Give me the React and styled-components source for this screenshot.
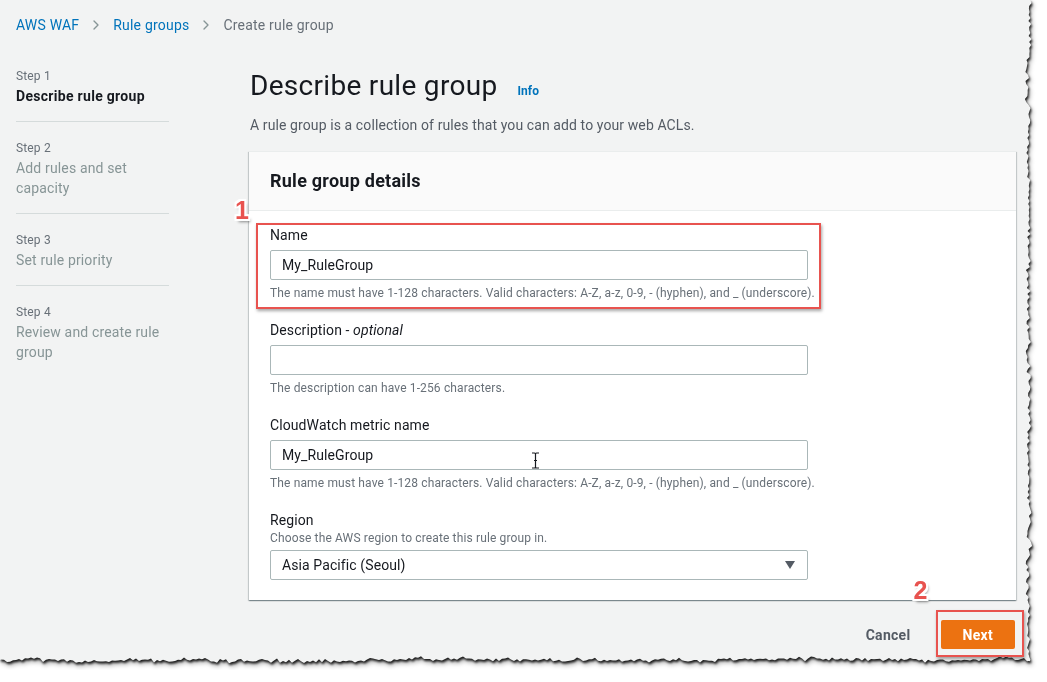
import React from "react";
import styled, { createGlobalStyle } from "styled-components";
import { ChevronRight } from "lucide-react";

const GlobalStyle = createGlobalStyle`
  html, body {
    margin: 0;
    padding: 0;
    background: #ffffff;
  }
  body {
    font-family: Roboto, "Liberation Sans", Arial, sans-serif;
    color: #16191f;
    letter-spacing: 0.1px;
  }
`;

// torn paper edge along right and bottom side of the screenshot
const FRAME_W = 1038;
const FRAME_H = 670;

function tornEdge() {
  let seed = 11;
  const rand = () => {
    seed = (seed * 16807) % 2147483647;
    return seed / 2147483647;
  };
  let slow = 0.5;
  const pts = ["0 0"];
  for (let y = 0; y <= FRAME_H - 6; y += 3) {
    slow = slow * 0.75 + rand() * 0.25;
    const x = FRAME_W - 3 - slow * 9 - rand() * 3.5;
    pts.push(`${x.toFixed(1)}px ${y}px`);
  }
  for (let x = FRAME_W - 8; x >= 0; x -= 3) {
    slow = slow * 0.75 + rand() * 0.25;
    const y = FRAME_H - 4 - slow * 9 - rand() * 3.5;
    pts.push(`${x}px ${y.toFixed(1)}px`);
  }
  pts.push(`0 ${FRAME_H - 10}px`);
  return `polygon(${pts.join(", ")})`;
}

const TORN = tornEdge();

const Shadow = styled.div`
  width: ${FRAME_W}px;
  height: ${FRAME_H}px;
  filter: drop-shadow(1px 2px 1px rgba(0, 0, 0, 0.85)) drop-shadow(1px 2px 2px rgba(0, 0, 0, 0.35));
`;

const Frame = styled.div`
  width: 100%;
  height: 100%;
  background: #f2f3f3;
  clip-path: ${(p) => p.$clip};
  box-sizing: border-box;
  padding: 15px 0 0 16px;
`;

const Crumbs = styled.nav`
  display: flex;
  align-items: center;
  gap: 9px;
  font-size: 14px;
  line-height: 20px;
  letter-spacing: 0.2px;
`;

const Crumb = styled.span`
  color: ${(p) => (p.$current ? "#687078" : "#0073bb")};
`;

const Layout = styled.div`
  display: grid;
  grid-template-columns: 153px 767px;
  column-gap: 80px;
  margin-top: 33px;
`;

const StepList = styled.ol`
  list-style: none;
  margin: 0;
  padding: 0;
`;

const Step = styled.li`
  padding: ${(p) => (p.$first ? "0" : "18px")} 0 15px;
  border-bottom: ${(p) => (p.$last ? "none" : "1px solid #d5dbdb")};
`;

const StepNum = styled.div`
  font-size: 12px;
  line-height: 16px;
  letter-spacing: 0.15px;
  color: #687078;
  margin-bottom: 2px;
`;

const StepTitle = styled.div`
  font-size: 14px;
  line-height: 20px;
  color: ${(p) => (p.$active ? "#16191f" : "#879596")};
  font-weight: ${(p) => (p.$active ? 700 : 400)};
  letter-spacing: ${(p) => (p.$active ? "0.3px" : "0.15px")};
`;

const Main = styled.main`
  display: flex;
  flex-direction: column;
`;

const TitleRow = styled.div`
  display: flex;
  align-items: center;
  padding-left: 1px;
`;

const Title = styled.h1`
  margin: 0;
  font-size: 28px;
  line-height: 36px;
  font-weight: 400;
  letter-spacing: 0.3px;
  color: #16191f;
`;

const Info = styled.a`
  margin: 10px 0 0 20px;
  font-size: 12px;
  font-weight: 700;
  color: #0073bb;
`;

const Lead = styled.p`
  margin: 11px 0 16px 1px;
  font-size: 14px;
  line-height: 20px;
  color: #545b64;
`;

const Card = styled.section`
  background: #ffffff;
  box-shadow: 0 1px 1px 0 rgba(0, 28, 36, 0.3), 1px 1px 1px 0 rgba(0, 28, 36, 0.15),
    -1px 1px 1px 0 rgba(0, 28, 36, 0.15);
  border-top: 1px solid #eaeded;
`;

const CardHead = styled.header`
  background: #fafafa;
  border-bottom: 1px solid #eaeded;
  padding: 18px 21px 18px;
`;

const CardTitle = styled.h2`
  margin: 0;
  font-size: 18px;
  line-height: 22px;
  font-weight: 700;
  letter-spacing: 0.25px;
`;

const CardBody = styled.div`
  display: flex;
  flex-direction: column;
  gap: 19px;
  padding: 14px 20px 20px 21px;
`;

const Field = styled.div`
  position: relative;
  display: flex;
  flex-direction: column;
  width: 538px;
`;

const Label = styled.label`
  font-size: 14px;
  line-height: 20px;
  color: #16191f;

  i {
    font-style: italic;
  }
`;

const Hint = styled.div`
  font-size: 12px;
  line-height: 16px;
  letter-spacing: 0.14px;
  color: #687078;
  margin-top: ${(p) => (p.$above ? "0" : "5px")};
  white-space: nowrap;
`;

const Input = styled.div`
  position: relative;
  box-sizing: border-box;
  height: 30px;
  margin-top: ${(p) => (p.$tight ? "4px" : "5px")};
  border: 1px solid #aab7b8;
  border-radius: 2px;
  background: #ffffff;
  display: flex;
  align-items: center;
  justify-content: space-between;
  padding: 0 12px 0 11px;
  font-size: 14px;
  color: #16191f;
`;

const Caret = styled.span`
  width: 0;
  height: 0;
  border-left: 5.5px solid transparent;
  border-right: 5.5px solid transparent;
  border-top: 8px solid #545b64;
`;

const Cursor = styled.svg`
  position: absolute;
  left: 260px;
  top: 11px;
`;

const Highlight = styled.div`
  position: absolute;
  left: ${(p) => p.$left}px;
  top: ${(p) => p.$top}px;
  width: ${(p) => p.$w}px;
  height: ${(p) => p.$h}px;
  box-sizing: border-box;
  border: 2px solid #e8534f;
  box-shadow: 1px 2px 3px rgba(0, 0, 0, 0.35);
  pointer-events: none;
`;

const Badge = styled.span`
  position: absolute;
  left: ${(p) => p.$left}px;
  top: ${(p) => p.$top}px;
  font-family: "Liberation Sans", Arial, sans-serif;
  font-weight: 700;
  font-size: 25px;
  line-height: 24px;
  letter-spacing: 0;
  color: #e8534f;
  text-shadow: -2px 0 0 #fff, 2px 0 0 #fff, 0 -2px 0 #fff, 0 2px 0 #fff,
    -2px -2px 0 #fff, 2px 2px 0 #fff, -2px 2px 0 #fff, 2px -2px 0 #fff,
    2px 3px 3px rgba(0, 0, 0, 0.45);
`;

const Footer = styled.div`
  display: flex;
  justify-content: flex-end;
  align-items: center;
  gap: 10px;
  margin-top: 20px;
  padding-right: 1px;
`;

const Button = styled.button`
  position: relative;
  height: 29px;
  padding: 0 ${(p) => (p.$primary ? "22px" : "20px")};
  border: none;
  border-radius: 2px;
  font-family: Roboto, "Liberation Sans", Arial, sans-serif;
  font-size: 14px;
  font-weight: 700;
  letter-spacing: 0.3px;
  background: ${(p) => (p.$primary ? "#ec7211" : "transparent")};
  color: ${(p) => (p.$primary ? "#ffffff" : "#545b64")};
`;

const steps = [
  { num: "Step 1", title: "Describe rule group" },
  { num: "Step 2", title: "Add rules and set capacity" },
  { num: "Step 3", title: "Set rule priority" },
  { num: "Step 4", title: "Review and create rule group" },
];

const nameHint =
  "The name must have 1-128 characters. Valid characters: A-Z, a-z, 0-9, - (hyphen), and _ (underscore).";

export default function App() {
  return (
    <>
      <GlobalStyle />
      <Shadow>
        <Frame $clip={TORN}>
          <Crumbs>
            <Crumb>AWS WAF</Crumb>
            <ChevronRight size={16} color="#879596" strokeWidth={2} />
            <Crumb>Rule groups</Crumb>
            <ChevronRight size={16} color="#879596" strokeWidth={2} />
            <Crumb $current>Create rule group</Crumb>
          </Crumbs>

          <Layout>
            <StepList>
              {steps.map((s, i) => (
                <Step key={s.num} $first={i === 0} $last={i === steps.length - 1}>
                  <StepNum>{s.num}</StepNum>
                  <StepTitle $active={i === 0}>{s.title}</StepTitle>
                </Step>
              ))}
            </StepList>

            <Main>
              <TitleRow>
                <Title>Describe rule group</Title>
                <Info>Info</Info>
              </TitleRow>
              <Lead>A rule group is a collection of rules that you can add to your web ACLs.</Lead>

              <Card>
                <CardHead>
                  <CardTitle>Rule group details</CardTitle>
                </CardHead>
                <CardBody>
                  <Field>
                    <Label>Name</Label>
                    <Input>My_RuleGroup</Input>
                    <Hint>{nameHint}</Hint>
                    <Highlight $left={-14} $top={-2} $w={565} $h={86} />
                    <Badge $left={-35} $top={-27}>1</Badge>
                  </Field>

                  <Field>
                    <Label>
                      Description - <i>optional</i>
                    </Label>
                    <Input />
                    <Hint>The description can have 1-256 characters.</Hint>
                  </Field>

                  <Field>
                    <Label>CloudWatch metric name</Label>
                    <Input>
                      My_RuleGroup
                      <Cursor width="9" height="17" viewBox="0 0 9 17">
                        <path
                          d="M1 1h2.5c.6 0 1 .4 1 1v13c0 .6.4 1 1 1H8M8 1H5.5c-.6 0-1 .4-1 1M4.5 15c0 .6-.4 1-1 1H1M3 8.5h3"
                          fill="none"
                          stroke="#16191f"
                          strokeWidth="1.2"
                        />
                      </Cursor>
                    </Input>
                    <Hint>{nameHint}</Hint>
                  </Field>

                  <Field>
                    <Label>Region</Label>
                    <Hint $above>Choose the AWS region to create this rule group in.</Hint>
                    <Input $tight>
                      Asia Pacific (Seoul)
                      <Caret />
                    </Input>
                  </Field>
                </CardBody>
              </Card>

              <Footer>
                <Button>Cancel</Button>
                <Button $primary>
                  Next
                  <Highlight $left={-5} $top={-10} $w={88} $h={47} />
                  <Badge $left={-27} $top={-42}>2</Badge>
                </Button>
              </Footer>
            </Main>
          </Layout>
        </Frame>
      </Shadow>
    </>
  );
}
